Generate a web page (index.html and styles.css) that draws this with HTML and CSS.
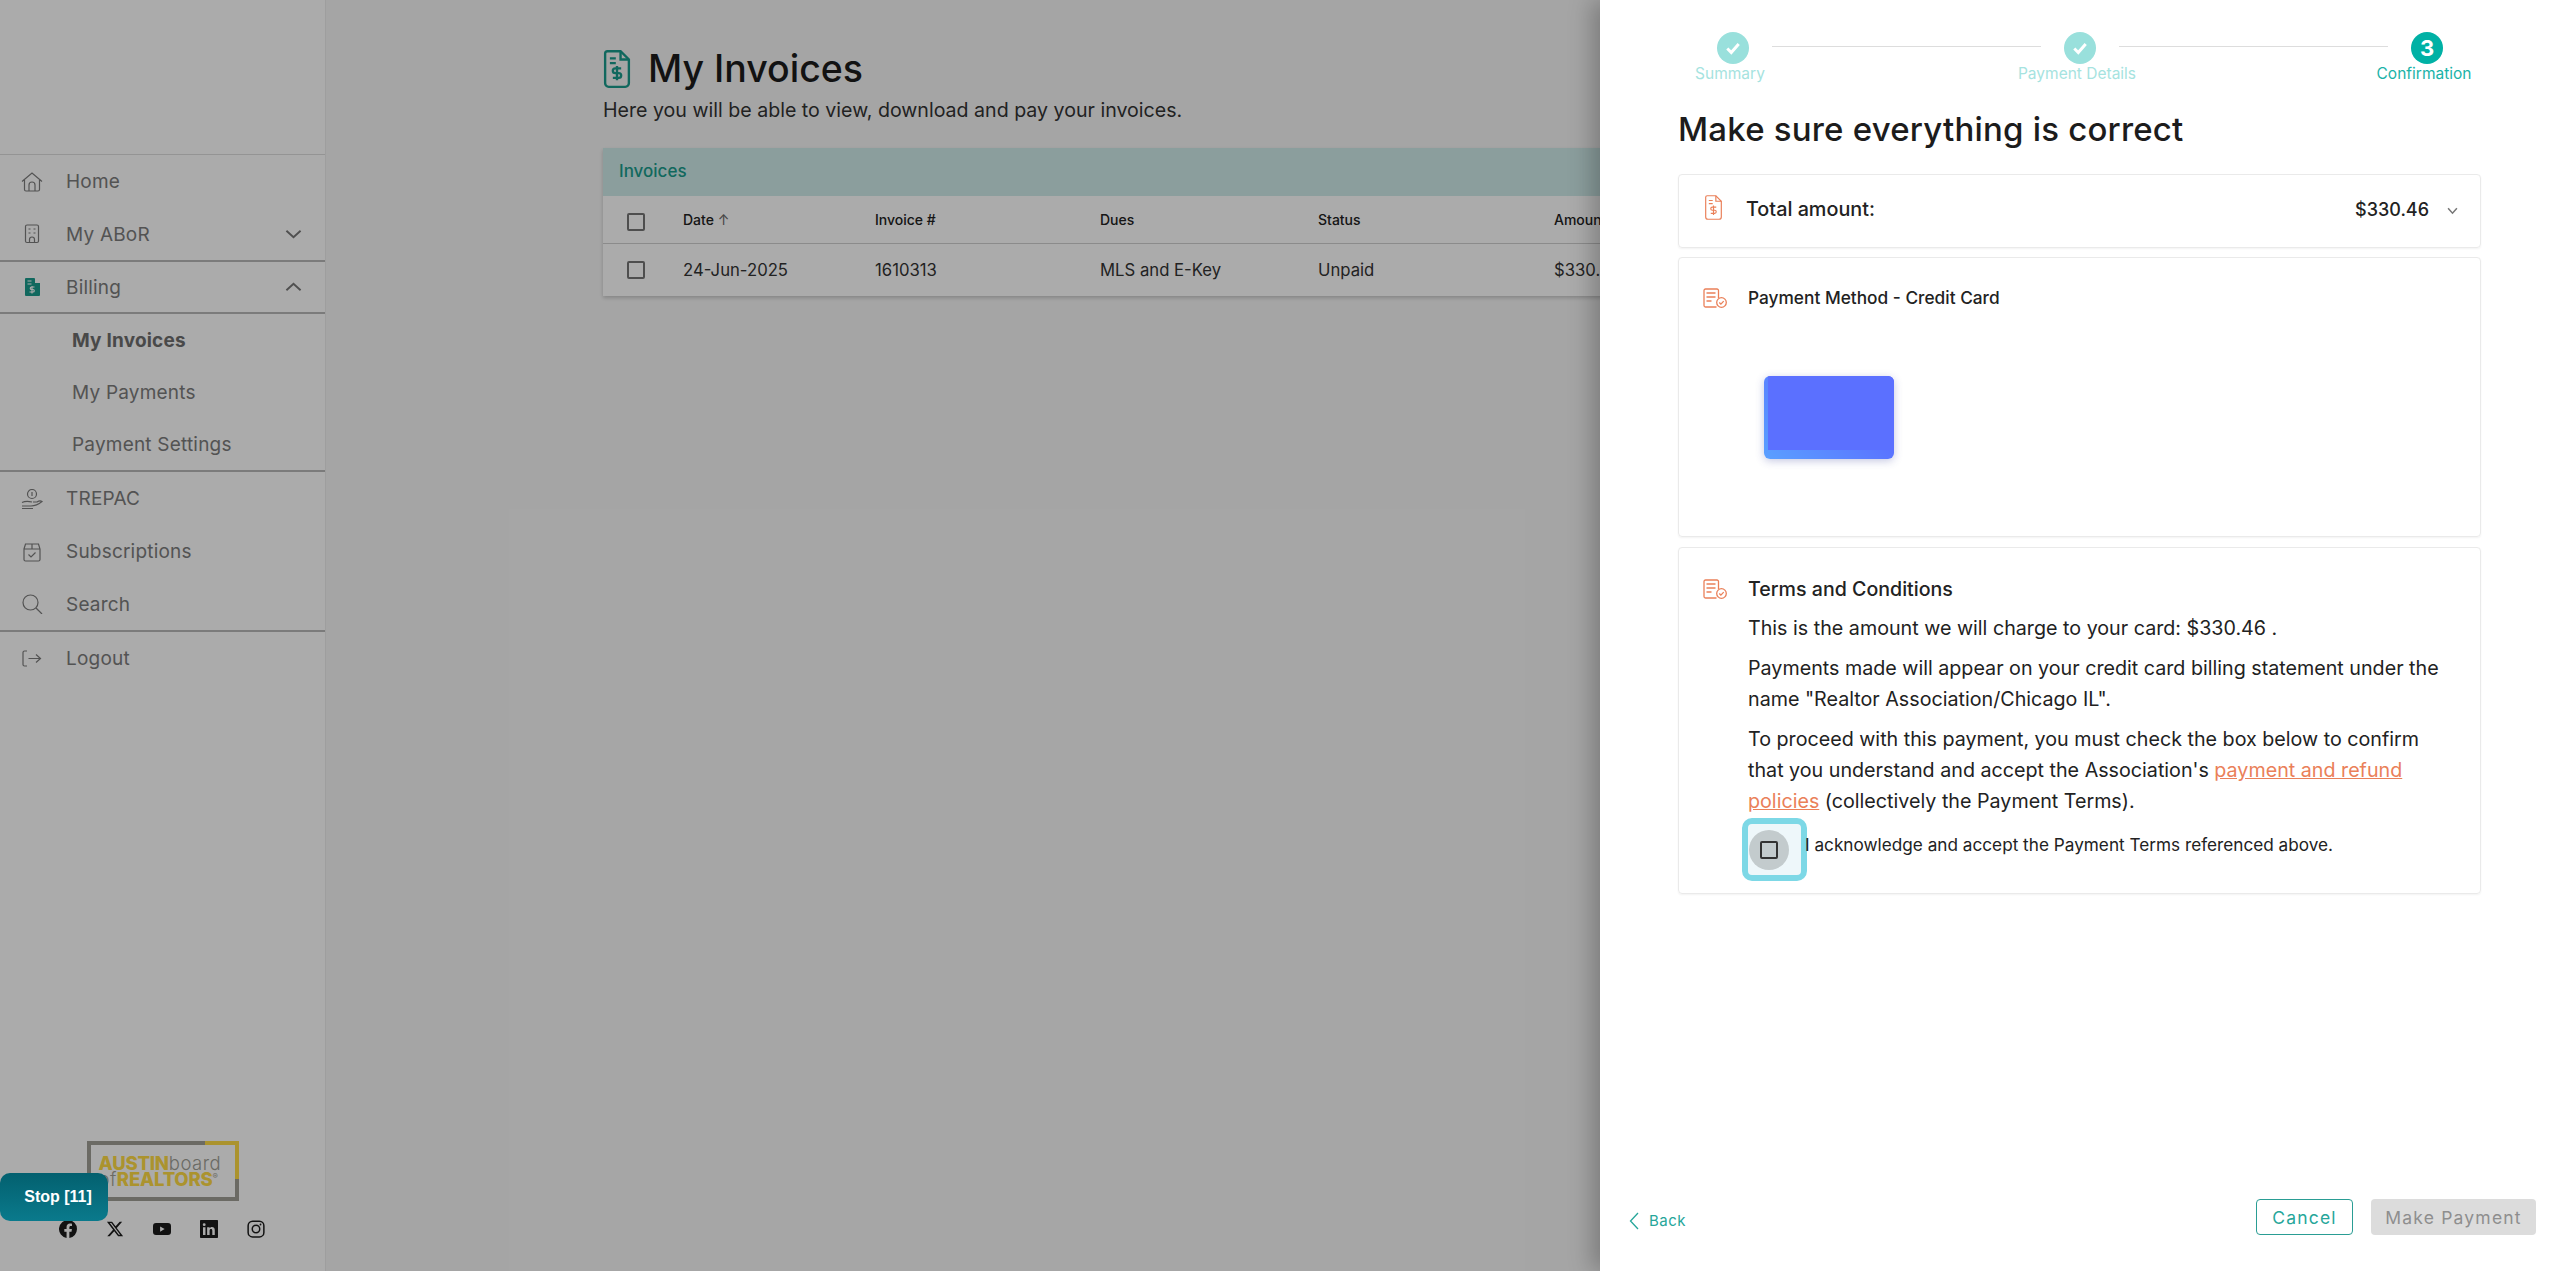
FILE: index.html
```html
<!DOCTYPE html>
<html lang="en">
<head>
    <meta charset="UTF-8">
    <meta name="viewport" content="width=device-width, initial-scale=1.0">
    <title>My Invoices</title>
    <link rel="stylesheet" href="styles.css">
</head>
<body>
    <svg class="sprite" width="0" height="0">
        <symbol id="doc-dollar" viewBox="0 0 22 32">
            <path d="M3 1h11l7 7v20a3 3 0 0 1-3 3H4a3 3 0 0 1-3-3V3a2 2 0 0 1 2-2z" fill="none" stroke="currentColor"/>
            <path d="M14 1v7h7M5 7h5M5 11h5" fill="none" stroke="currentColor"/>
            <path d="M14.5 15.5h-5a2 2 0 0 0 0 4h3a2 2 0 0 1 0 4h-5M11 13.5v12" fill="none" stroke="currentColor"/>
        </symbol>
        <symbol id="doc-check" viewBox="0 0 24 20">
            <path d="M15.500 10V2.500A1.500 1.500 0 0 0 14 1H2.500A1.500 1.500 0 0 0 1 2.500v15A1.500 1.500 0 0 0 2.500 19H13.500" fill="none" stroke="currentColor" stroke-width="1.300"/>
            <path d="M3.500 5h9M3.500 9h9M3.500 13h5" fill="none" stroke="currentColor" stroke-width="1.500"/>
            <circle cx="18.500" cy="14.500" r="4.800" fill="none" stroke="currentColor" stroke-width="1.300"/>
            <path d="M16.300 14.500l1.600 1.600 2.800-3" fill="none" stroke="currentColor" stroke-width="1.300"/>
        </symbol>
    </svg>

    <div class="page">
        <aside class="sidebar">
            <nav class="nav">
                <a class="nav-item">
                    <svg class="nav-icon" viewBox="0 0 22 20"><path d="M1 9.500L11 1l10 8.500M3.500 8v9.500a1.500 1.500 0 0 0 1.500 1.500h12a1.500 1.500 0 0 0 1.500-1.500V8M8 19v-6a3 3 0 0 1 6 0v6"/></svg>
                    <span>Home</span>
                </a>
                <a class="nav-item divided tall">
                    <svg class="nav-icon" viewBox="0 0 22 20"><rect x="4.500" y="1" width="13" height="17.500" rx="1.500"/><path d="M7.500 5h2M12.500 5h2M7.500 9h2M12.500 9h2M8.500 18.500v-3a2.500 2.500 0 0 1 5 0v3"/></svg>
                    <span>My ABoR</span>
                    <svg class="nav-chevron" viewBox="0 0 18 10"><path d="M1.500 1.500L9 8.500l7.500-7"/></svg>
                </a>
                <a class="nav-item divided billing">
                    <svg class="nav-icon active" viewBox="0 0 22 20"><path d="M6 1h7l1 .5v4.500h5v12a1 1 0 0 1-1 1H5a1 1 0 0 1-1-1V2a1 1 0 0 1 1-1z"/><path class="cut" d="M6.500 4h4M6.500 7h4M13.500 10h-3a1.200 1.200 0 0 0 0 2.500h1.500a1.200 1.200 0 0 1 0 2.500H8.500M11 9v7.500"/></svg>
                    <span>Billing</span>
                    <svg class="nav-chevron" viewBox="0 0 18 10"><path d="M1.500 8.500L9 1.500l7.500 7"/></svg>
                </a>
                <div class="subnav">
                    <a class="sub-item current">My Invoices</a>
                    <a class="sub-item">My Payments</a>
                    <a class="sub-item">Payment Settings</a>
                </div>
                <a class="nav-item">
                    <svg class="nav-icon" viewBox="0 0 22 20"><circle cx="11" cy="5" r="4.500"/><path d="M1 17h9c4 0 8-2 11-4.500-1.500-1-3-.8-5 .5h-4M1 13.500c3-1.500 6-1.500 10-.5M1 19.500h11"/><path d="M11 3v4" /></svg>
                    <span>TREPAC</span>
                </a>
                <a class="nav-item">
                    <svg class="nav-icon" viewBox="0 0 22 20"><path d="M3 7l1.500-5h13L19 7v10.500a1.500 1.500 0 0 1-1.500 1.500h-13A1.500 1.500 0 0 1 3 17.500zM3 7h16M11 2v5M7.500 12.500l2.500 2.500 4.500-4.500"/></svg>
                    <span>Subscriptions</span>
                </a>
                <a class="nav-item divided tall">
                    <svg class="nav-icon" viewBox="0 0 22 20"><circle cx="9.500" cy="8.500" r="7.500"/><path d="M15 14l6 6"/></svg>
                    <span>Search</span>
                </a>
                <a class="nav-item">
                    <svg class="nav-icon" viewBox="0 0 22 20"><path d="M6 2H3.500A1.500 1.500 0 0 0 2 3.500v12A1.500 1.500 0 0 0 3.500 17H6M7.500 9.500H19M15 5.500l4.500 4-4.500 4"/></svg>
                    <span>Logout</span>
                </a>
            </nav>

            <div class="sidebar-footer">
                <div class="logo">
                    <div class="logo-line"><b>AUSTIN</b><span>board</span></div>
                    <div class="logo-line"><span>of</span><b>REALTORS</b><sup>®</sup></div>
                </div>
                <div class="socials">
                    <svg viewBox="0 0 24 24"><path d="M24 12a12 12 0 1 0-13.900 11.900v-8.400H7.100V12h3V9.400c0-3 1.800-4.700 4.500-4.700 1.300 0 2.700.2 2.700.2v3h-1.500c-1.500 0-2 .9-2 1.900V12h3.400l-.5 3.500h-2.900v8.400A12 12 0 0 0 24 12z"/></svg>
                    <svg viewBox="0 0 24 24"><path d="M18.244 2.250h3.308l-7.227 8.260 8.502 11.240H16.170l-5.214-6.817L4.990 21.750H1.680l7.730-8.835L1.254 2.250H8.080l4.713 6.231zm-1.161 17.520h1.833L7.084 4.126H5.117z"/></svg>
                    <svg viewBox="0 0 24 24"><path fill-rule="evenodd" d="M4 4h16a4 4 0 0 1 4 4v8a4 4 0 0 1-4 4H4a4 4 0 0 1-4-4V8a4 4 0 0 1 4-4zm5.500 4.500v7l6-3.500z"/></svg>
                    <svg viewBox="0 0 24 24"><path fill-rule="evenodd" d="M1 0h22a1 1 0 0 1 1 1v22a1 1 0 0 1-1 1H1a1 1 0 0 1-1-1V1a1 1 0 0 1 1-1zm3 9.500V20h3.300V9.500zM5.600 4.300a1.900 1.900 0 1 0 0 3.800 1.900 1.900 0 0 0 0-3.800zM9.500 9.500V20h3.300v-5.500c0-1.500.6-2.400 1.900-2.400 1.200 0 1.700.9 1.700 2.400V20h3.300v-6.300c0-2.900-1.500-4.400-3.700-4.400-1.500 0-2.600.8-3.200 1.800V9.500z"/></svg>
                    <svg class="outline" viewBox="0 0 24 24"><rect x="1.500" y="1.500" width="21" height="21" rx="6"/><circle cx="12" cy="12" r="5"/><circle class="dot" cx="18" cy="6" r="1.200"/></svg>
                </div>
            </div>
        </aside>

        <main class="content">
            <div class="page-title">
                <svg class="title-icon"><use href="#doc-dollar"/></svg>
                <h1>My Invoices</h1>
            </div>
            <p class="page-sub">Here you will be able to view, download and pay your invoices.</p>

            <section class="invoices">
                <div class="invoices-head">Invoices</div>
                <table>
                    <thead>
                        <tr>
                            <th class="col-check"><span class="box"></span></th>
                            <th class="col-date">Date <span class="sort">&#8593;</span></th>
                            <th class="col-num">Invoice #</th>
                            <th class="col-dues">Dues</th>
                            <th class="col-status">Status</th>
                            <th>Amount</th>
                        </tr>
                    </thead>
                    <tbody>
                        <tr>
                            <td class="col-check"><span class="box"></span></td>
                            <td>24-Jun-2025</td>
                            <td>1610313</td>
                            <td>MLS and E-Key</td>
                            <td>Unpaid</td>
                            <td>$330.46</td>
                        </tr>
                    </tbody>
                </table>
            </section>
        </main>
    </div>

    <div class="overlay"></div>

    <button class="stop-btn">Stop [11]</button>

    <div class="drawer">
        <div class="drawer-body">
            <div class="stepper">
                <div class="step done">
                    <span class="step-dot"><svg viewBox="0 0 14 12"><path d="M2 6.500l3.500 3.500L12 2.500"/></svg></span>
                    <span class="step-label">Summary</span>
                </div>
                <div class="step-line"></div>
                <div class="step done">
                    <span class="step-dot"><svg viewBox="0 0 14 12"><path d="M2 6.500l3.500 3.500L12 2.500"/></svg></span>
                    <span class="step-label">Payment Details</span>
                </div>
                <div class="step-line"></div>
                <div class="step current">
                    <span class="step-dot">3</span>
                    <span class="step-label">Confirmation</span>
                </div>
            </div>

            <h2 class="drawer-title">Make sure everything is correct</h2>

            <div class="panel total">
                <svg class="icon-dollar"><use href="#doc-dollar"/></svg>
                <span class="total-label">Total amount:</span>
                <span class="total-value">$330.46</span>
                <svg class="total-chevron" viewBox="0 0 10 7"><path d="M1 1l4 4.500L9 1"/></svg>
            </div>

            <div class="panel method">
                <div class="panel-head">
                    <svg class="icon-check"><use href="#doc-check"/></svg>
                    <span class="method-title">Payment Method - Credit Card</span>
                </div>
                <div class="credit-card"><div class="credit-card-face"></div></div>
            </div>

            <div class="panel terms">
                <div class="panel-head">
                    <svg class="icon-check"><use href="#doc-check"/></svg>
                    <span class="terms-title">Terms and Conditions</span>
                </div>
                <div class="terms-text">
                    <p>This is the amount we will charge to your card: $330.46 .</p>
                    <p>Payments made will appear on your credit card billing statement under the<br>name "Realtor Association/Chicago IL".</p>
                    <p>To proceed with this payment, you must check the box below to confirm<br>that you understand and accept the Association's <a href="#">payment and refund<br>policies</a> (collectively the Payment Terms).</p>
                </div>
                <div class="accept">
                    <span class="focus-ring"><span class="ripple"><span class="box dark"></span></span></span>
                    <span class="accept-text">I acknowledge and accept the Payment Terms referenced above.</span>
                </div>
            </div>
        </div>

        <div class="drawer-actions">
            <a class="back">
                <svg viewBox="0 0 10 18"><path d="M9 1L1.500 9 9 17"/></svg>
                <span>Back</span>
            </a>
            <div class="action-btns">
                <button class="btn-cancel">Cancel</button>
                <button class="btn-pay" disabled>Make Payment</button>
            </div>
        </div>
    </div>
</body>
</html>
```

FILE: styles.css
```css
* {
    box-sizing: border-box;
}
html, body {
    height: 100%;
}
body {
    margin: 0;
    font-family: Inter, "Noto Sans", sans-serif;
    color: #222;
    overflow: hidden;
    position: relative;
}
.sprite {
    position: absolute;
}
.page {
    display: flex;
    height: 100%;
    background: #f7f7f7;
}

/* sidebar */
.sidebar {
    width: 326px;
    flex-shrink: 0;
    background: #fff;
    border-right: 1px solid #ececec;
    display: flex;
    flex-direction: column;
    padding-top: 154px;
}
.nav {
    border-top: 1px solid #ddd;
}
.nav-item {
    height: 53px;
    display: flex;
    align-items: center;
    padding: 0 23px 0 21px;
    font-size: 19px;
    letter-spacing: 0.2px;
    color: #7c7c7c;
}
.nav-item.divided {
    border-bottom: 2px solid #b8b8b8;
}
.nav-item.tall {
    height: 54px;
}
.nav-item.billing {
    height: 52px;
}
.nav-icon {
    width: 22px;
    height: 20px;
    margin-right: 23px;
    fill: none;
    stroke: #7c7c7c;
    stroke-width: 1.2;
}
.nav-icon.active {
    fill: #1a9c8c;
    stroke: none;
}
.nav-icon .cut {
    fill: none;
    stroke: #fff;
    stroke-width: 1.2;
}
.nav-chevron {
    width: 17px;
    height: 10px;
    margin-left: auto;
    fill: none;
    stroke: #777;
    stroke-width: 2;
}
.subnav {
    border-bottom: 2px solid #b8b8b8;
}
.sub-item {
    display: flex;
    align-items: center;
    height: 52px;
    padding-left: 72px;
    font-size: 19px;
    letter-spacing: 0.2px;
    color: #7c7c7c;
}
.sub-item.current {
    font-weight: 700;
    color: #6e6e6e;
}
.sidebar-footer {
    margin-top: auto;
    padding-bottom: 33px;
    display: flex;
    flex-direction: column;
    align-items: center;
}
.logo {
    width: 152px;
    height: 60px;
    border: 4px solid #a09f96;
    padding: 10px 0 0 8px;
    position: relative;
    font-size: 18.5px;
    line-height: 16px;
    letter-spacing: -0.2px;
    color: #ffdc45;
    white-space: nowrap;
}
.logo::before {
    content: "";
    position: absolute;
    top: -4px;
    right: -4px;
    width: 30px;
    height: 34px;
    border-top: 4px solid #ffdc45;
    border-right: 4px solid #ffdc45;
}
.logo-line span {
    color: #a09f96;
    font-weight: 300;
    letter-spacing: 0.5px;
}
.logo-line b {
    font-weight: 800;
}
.logo-line sup {
    font-size: 8px;
    line-height: 0;
    color: #a09f96;
}
.socials {
    display: flex;
    gap: 29px;
    margin-top: 19px;
    margin-right: 2px;
}
.socials svg {
    width: 18px;
    height: 18px;
    fill: #1c1c1c;
}
.socials .outline {
    fill: none;
    stroke: #1c1c1c;
    stroke-width: 2;
}
.socials .dot {
    fill: #1c1c1c;
    stroke: none;
}

/* invoices page */
.content {
    flex: 1;
    padding: 47px 40px 0 277px;
}
.page-title {
    display: flex;
    align-items: center;
    gap: 17px;
}
.title-icon {
    width: 28px;
    height: 38px;
    color: #1a9c8c;
    stroke-width: 2;
}
.page-title h1 {
    margin: 0;
    font-size: 37.5px;
    line-height: 44px;
    font-weight: 500;
    color: #1c1c1c;
}
.page-sub {
    margin: 7px 0 0;
    font-size: 19.6px;
    line-height: 25px;
    color: #333;
}
.invoices {
    margin-top: 25px;
    background: #fff;
    box-shadow: 0 2px 4px rgba(0, 0, 0, 0.2);
}
.invoices-head {
    height: 48px;
    padding: 0 16px 2px;
    display: flex;
    align-items: center;
    background: #cfecea;
    color: #1a9c8c;
    font-size: 17px;
    font-weight: 500;
}
.invoices table {
    width: 100%;
    border-collapse: collapse;
    table-layout: fixed;
}
.invoices th, .invoices td {
    text-align: left;
    padding: 0;
    font-size: 16.7px;
    color: #333;
}
.invoices th {
    height: 47px;
    font-size: 14px;
    font-weight: 500;
    color: #222;
    border-bottom: 1px solid #cfcfcf;
}
.invoices th .box {
    margin-top: 6px;
}
.invoices td {
    height: 53px;
}
.col-check {
    width: 80px;
    padding-left: 24px !important;
}
.col-date {
    width: 192px;
}
.col-num {
    width: 225px;
}
.col-dues {
    width: 218px;
}
.col-status {
    width: 236px;
}
.sort {
    font-weight: 400;
    color: #666;
}
.box {
    display: block;
    width: 18px;
    height: 18px;
    border: 2px solid #757575;
    border-radius: 2px;
}
.box.dark {
    border-color: #333;
}

/* dim layer, automation button */
.overlay {
    position: absolute;
    inset: 0;
    background: rgba(0, 0, 0, 0.33);
}
.stop-btn {
    position: absolute;
    left: 0;
    top: 1173px;
    width: 108px;
    height: 48px;
    border: none;
    border-radius: 10px;
    padding: 0 0 0 8px;
    background: linear-gradient(180deg, #03606f, #0a7a8c);
    color: #fff;
    font-family: "Liberation Sans", sans-serif;
    font-size: 16px;
    font-weight: 700;
}

/* drawer */
.drawer {
    position: absolute;
    top: 0;
    right: 0;
    bottom: 0;
    width: 960px;
    background: #fff;
    box-shadow: -8px 0 22px rgba(0, 0, 0, 0.25);
    display: flex;
    flex-direction: column;
}
.drawer-body {
    padding: 32px 79px 0 78px;
}
.stepper {
    display: flex;
    padding-left: 16px;
    height: 58px;
}
.step {
    width: 78px;
    display: flex;
    flex-direction: column;
    align-items: center;
}
.step-dot {
    width: 32px;
    height: 32px;
    border-radius: 50%;
    display: flex;
    align-items: center;
    justify-content: center;
    font-size: 22px;
    font-weight: 700;
    color: #fff;
}
.step-dot svg {
    width: 16px;
    height: 14px;
    fill: none;
    stroke: #fff;
    stroke-width: 2.6;
}
.step-label {
    white-space: nowrap;
    font-size: 15.5px;
    line-height: 18px;
    margin: 1px 6px 0 0;
}
.step.done .step-dot {
    background: #99e0dc;
}
.step.done .step-label {
    color: #a6e3e0;
}
.step.current .step-dot {
    background: #00b1a5;
}
.step.current .step-label {
    color: #1ab3a8;
}
.step-line {
    width: 269px;
    height: 1px;
    margin-top: 14px;
    background: #ddd;
}
.drawer-title {
    margin: 17px 0 0;
    font-size: 33px;
    letter-spacing: 0.2px;
    line-height: 44px;
    font-weight: 500;
    color: #1c1c1c;
}
.panel {
    border: 1px solid #eaeaea;
    border-radius: 4px;
    box-shadow: 0 1px 2px rgba(0, 0, 0, 0.05);
}
.total {
    height: 74px;
    margin-top: 23px;
    padding: 0 22px 0 25px;
    display: flex;
    align-items: center;
}
.icon-dollar {
    width: 19px;
    height: 25px;
    margin: -8px 23px 0 0;
    color: #ea8059;
    stroke-width: 1.5;
}
.total-label, .total-value {
    font-size: 18px;
    font-weight: 500;
    color: #222;
    margin-top: -4px;
}
.total-label {
    font-size: 19.8px;
}
.total-value {
    margin-left: auto;
}
.total-chevron {
    width: 11px;
    height: 8px;
    margin-left: 18px;
    fill: none;
    stroke: #777;
    stroke-width: 1.4;
}
.panel-head {
    display: flex;
    align-items: center;
    padding: 29px 0 0 24px;
}
.icon-check {
    width: 24px;
    height: 20px;
    margin-right: 21px;
    color: #ea8059;
}
.method {
    height: 280px;
    margin-top: 9px;
}
.method-title {
    font-size: 17.3px;
    font-weight: 500;
    color: #222;
}
.credit-card {
    width: 130px;
    height: 83px;
    margin: 68px 0 0 85px;
    border-radius: 6px;
    background: linear-gradient(45deg, #5aa0ff, #5a5aff);
    box-shadow: 0 2px 8px rgba(60, 70, 160, 0.3);
    overflow: hidden;
}
.credit-card-face {
    height: 74px;
    margin-left: 4px;
    background: #5b70ff;
}
.terms {
    height: 347px;
    margin-top: 10px;
}
.terms-title {
    font-size: 19.6px;
    font-weight: 500;
    color: #222;
}
.terms-text {
    padding: 12px 10px 0 69px;
    font-size: 19.7px;
    line-height: 31px;
    color: #222;
}
.terms-text p {
    margin: 0 0 9px;
}
.terms-text a {
    color: #ea8059;
}
.accept {
    display: flex;
    align-items: center;
    padding-left: 63px;
    margin-top: -8px;
}
.focus-ring {
    width: 65px;
    height: 63px;
    border: 6px solid #7dd8e6;
    border-radius: 10px;
    background: #eef7fa;
    display: flex;
    align-items: center;
    justify-content: center;
}
.ripple {
    width: 40px;
    height: 40px;
    border-radius: 50%;
    background: #c3cbcd;
    display: flex;
    align-items: center;
    justify-content: center;
    margin-right: 12px;
}
.accept-text {
    font-size: 17.2px;
    color: #222;
    margin: -10px 0 0 -2px;
}
.drawer-actions {
    margin-top: auto;
    display: flex;
    justify-content: space-between;
    align-items: flex-end;
    padding: 0 24px 36px 29px;
}
.back {
    display: flex;
    align-items: center;
    gap: 10px;
    color: #26a69a;
    font-size: 15px;
    letter-spacing: 0.5px;
    margin-bottom: 5px;
}
.back svg {
    width: 10px;
    height: 18px;
    fill: none;
    stroke: #26a69a;
    stroke-width: 1.3;
}
.action-btns {
    display: flex;
    gap: 18px;
}
.action-btns button {
    height: 36px;
    border-radius: 4px;
    font-family: inherit;
    font-size: 17.5px;
    letter-spacing: 1.2px;
}
.btn-cancel {
    width: 97px;
    border: 1.5px solid #2a9d94;
    background: #fff;
    color: #26a69a;
}
.btn-pay {
    width: 165px;
    border: none;
    background: #dcdcdc;
    color: #8e8e8e;
}
```
